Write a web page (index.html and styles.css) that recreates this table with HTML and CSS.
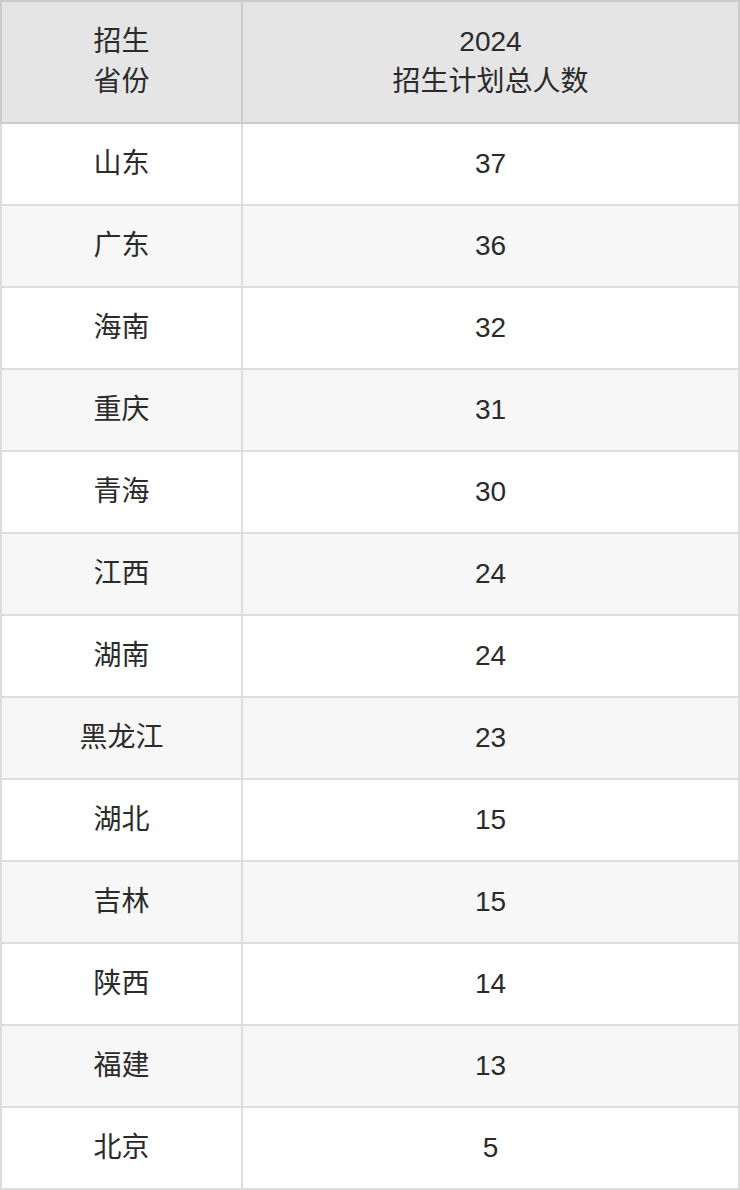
FILE: index.html
```html
<!DOCTYPE html>
<html lang="zh-CN">
<head>
<meta charset="utf-8">
<title>招生计划</title>
<link rel="stylesheet" href="styles.css">
</head>
<body>
<table class="plan">
  <thead>
    <tr>
      <th class="c1">招生<br>省份</th>
      <th class="c2">2024<br>招生计划总人数</th>
    </tr>
  </thead>
  <tbody>
    <tr><td class="c1">山东</td><td class="c2">37</td></tr>
    <tr><td class="c1">广东</td><td class="c2">36</td></tr>
    <tr><td class="c1">海南</td><td class="c2">32</td></tr>
    <tr><td class="c1">重庆</td><td class="c2">31</td></tr>
    <tr><td class="c1">青海</td><td class="c2">30</td></tr>
    <tr><td class="c1">江西</td><td class="c2">24</td></tr>
    <tr><td class="c1">湖南</td><td class="c2">24</td></tr>
    <tr><td class="c1">黑龙江</td><td class="c2">23</td></tr>
    <tr><td class="c1">湖北</td><td class="c2">15</td></tr>
    <tr><td class="c1">吉林</td><td class="c2">15</td></tr>
    <tr><td class="c1">陕西</td><td class="c2">14</td></tr>
    <tr><td class="c1">福建</td><td class="c2">13</td></tr>
    <tr><td class="c1">北京</td><td class="c2">5</td></tr>
  </tbody>
</table>
</body>
</html>
```
FILE: styles.css
```css
html, body {
  margin: 0;
  padding: 0;
  background: #ffffff;
}

.plan {
  width: 740px;
  border-collapse: separate;
  border-spacing: 0;
  table-layout: fixed;
  font-family: "Liberation Sans", "Noto Sans CJK SC", sans-serif;
  font-size: 28px;
  color: #2b2b2b;
}

.plan th,
.plan td {
  padding: 0;
  text-align: center;
  vertical-align: middle;
  font-weight: normal;
  box-sizing: border-box;
}

.plan th {
  background: #e5e5e5;
  border-top: 2px solid #cccccc;
  border-bottom: 2px solid #cccccc;
  border-right: 2px solid #cccccc;
  height: 124px;
  line-height: 40px;
}

.plan th.c1 {
  border-left: 2px solid #cccccc;
}

.plan td {
  height: 82px;
  line-height: 40px;
  border-bottom: 2px solid #dddddd;
  border-right: 2px solid #dddddd;
}

.plan td.c1 {
  border-left: 2px solid #dddddd;
}

.plan .c1 {
  width: 243px;
}

.plan .c2 {
  width: 497px;
}

.plan tbody tr:nth-child(even) td {
  background: #f7f7f7;
}
```
